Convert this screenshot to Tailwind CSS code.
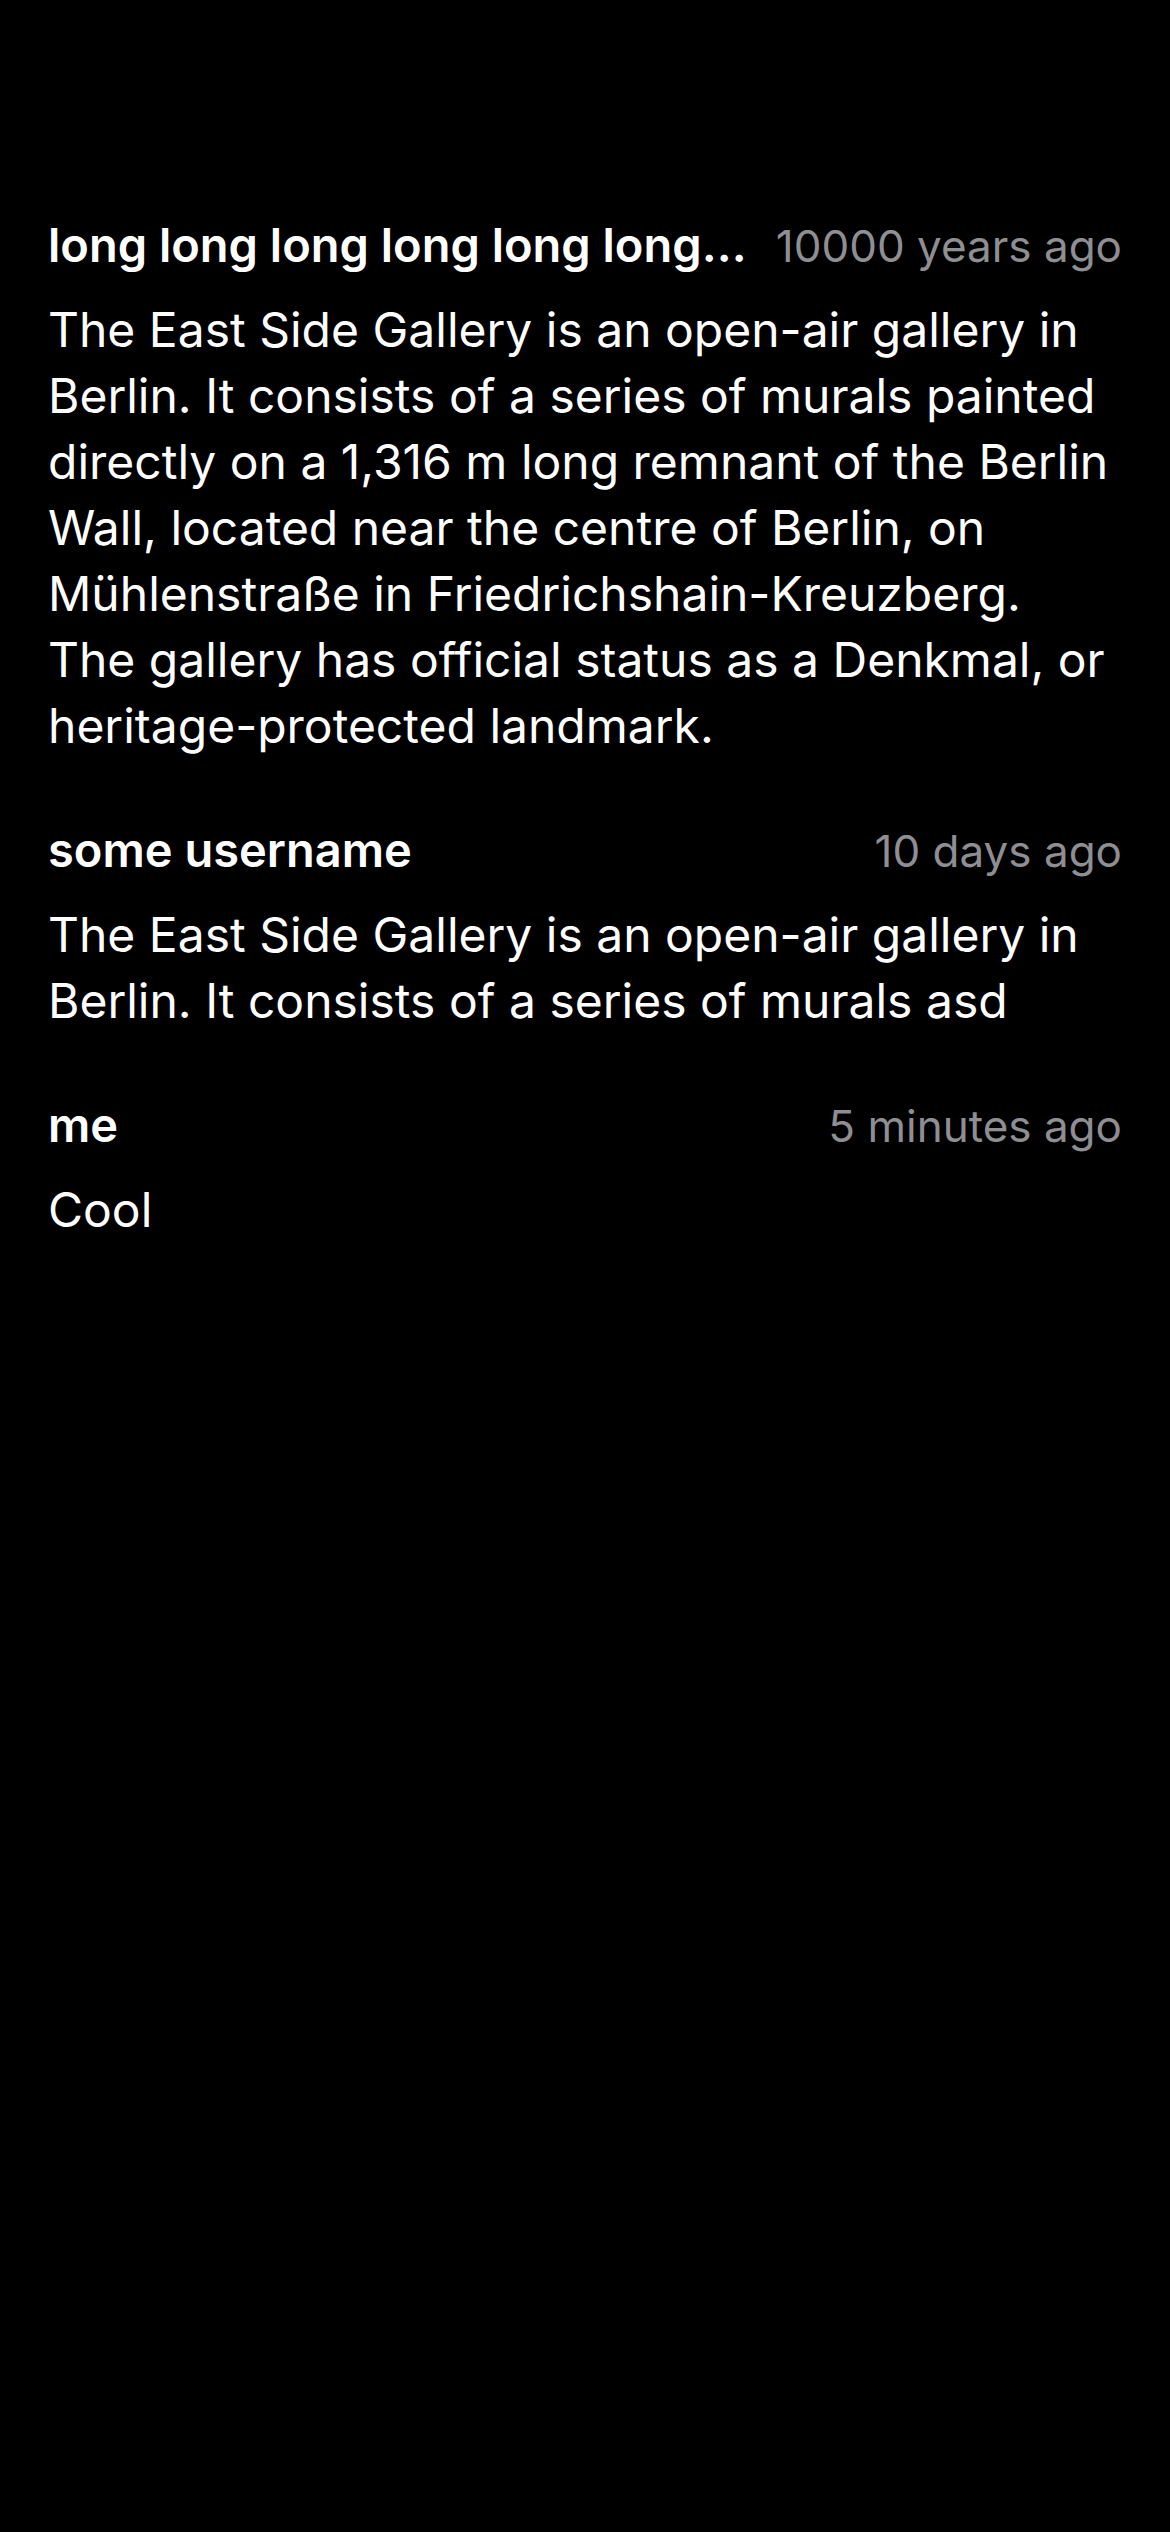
<!DOCTYPE html>
<html lang="en">
<head>
<meta charset="utf-8">
<meta name="viewport" content="width=device-width, initial-scale=1">
<title>Comments</title>
<script src="https://cdn.jsdelivr.net/npm/@tailwindcss/browser@4"></script>
</head>
<body class="min-h-screen bg-black font-['Inter',sans-serif] text-white">
<main class="flex flex-col gap-[58px] px-12 pt-[212px] text-[48px] leading-[66px]">
  <article class="flex flex-col gap-[18px]">
    <header class="flex items-baseline justify-between gap-4">
      <h2 class="min-w-0 truncate text-[47px] font-semibold">long long long long long long…</h2>
      <time class="shrink-0 text-[44px] text-[#8e8e93]">10000 years ago</time>
    </header>
    <p>The East Side Gallery is an open-air gallery in Berlin. It consists of a series of murals painted directly on a 1,316 m long remnant of the Berlin Wall, located near the centre of Berlin, on Mühlenstraße in Friedrichshain-Kreuzberg.<br>The gallery has official status as a Denkmal, or heritage-protected landmark.</p>
  </article>
  <article class="flex flex-col gap-[18px]">
    <header class="flex items-baseline justify-between gap-4">
      <h2 class="min-w-0 truncate text-[47px] font-semibold">some username</h2>
      <time class="shrink-0 text-[44px] text-[#8e8e93]">10 days ago</time>
    </header>
    <p>The East Side Gallery is an open-air gallery in Berlin. It consists of a series of murals asd</p>
  </article>
  <article class="flex flex-col gap-[18px]">
    <header class="flex items-baseline justify-between gap-4">
      <h2 class="min-w-0 truncate text-[47px] font-semibold">me</h2>
      <time class="shrink-0 text-[44px] text-[#8e8e93]">5 minutes ago</time>
    </header>
    <p>Cool</p>
  </article>
</main>
</body>
</html>
